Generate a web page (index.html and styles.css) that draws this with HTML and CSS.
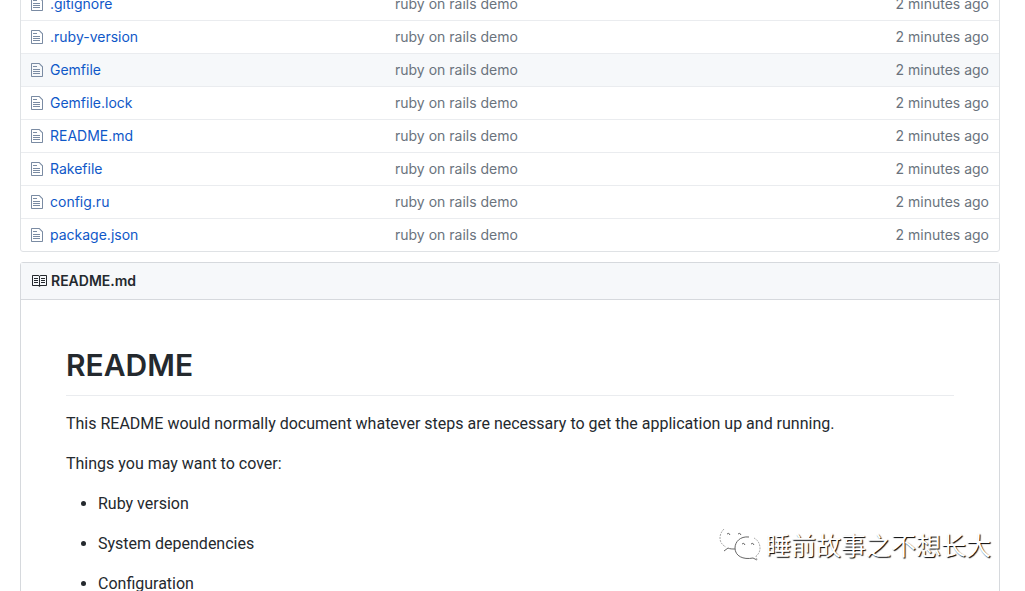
FILE: index.html
```
<!DOCTYPE html>
<html lang="en">
<head>
<meta charset="utf-8">
<title>README.md</title>
<link rel="stylesheet" href="styles.css">
</head>
<body>
<svg class="defs" aria-hidden="true">
  <symbol id="file" viewBox="0 0 12 16"><path d="M6 5H2V4h4v1zM2 8h7V7H2v1zm0 2h7V9H2v1zm0 2h7v-1H2v1zm10-7.5V14c0 .55-.45 1-1 1H1c-.55 0-1-.45-1-1V2c0-.55.45-1 1-1h7.5L12 4.5zM11 5L8 2H1v12h10V5z"/></symbol>
</svg>
<main class="page">
  <div class="files">
    <table class="file-table">
      <tbody>
        <tr><td class="icon"><svg class="file-icon"><use href="#file"/></svg></td><td class="name"><a href="#">.gitignore</a></td><td class="message">ruby on rails demo</td><td class="age">2 minutes ago</td></tr>
        <tr><td class="icon"><svg class="file-icon"><use href="#file"/></svg></td><td class="name"><a href="#">.ruby-version</a></td><td class="message">ruby on rails demo</td><td class="age">2 minutes ago</td></tr>
        <tr class="active"><td class="icon"><svg class="file-icon"><use href="#file"/></svg></td><td class="name"><a href="#">Gemfile</a></td><td class="message">ruby on rails demo</td><td class="age">2 minutes ago</td></tr>
        <tr><td class="icon"><svg class="file-icon"><use href="#file"/></svg></td><td class="name"><a href="#">Gemfile.lock</a></td><td class="message">ruby on rails demo</td><td class="age">2 minutes ago</td></tr>
        <tr><td class="icon"><svg class="file-icon"><use href="#file"/></svg></td><td class="name"><a href="#">README.md</a></td><td class="message">ruby on rails demo</td><td class="age">2 minutes ago</td></tr>
        <tr><td class="icon"><svg class="file-icon"><use href="#file"/></svg></td><td class="name"><a href="#">Rakefile</a></td><td class="message">ruby on rails demo</td><td class="age">2 minutes ago</td></tr>
        <tr><td class="icon"><svg class="file-icon"><use href="#file"/></svg></td><td class="name"><a href="#">config.ru</a></td><td class="message">ruby on rails demo</td><td class="age">2 minutes ago</td></tr>
        <tr><td class="icon"><svg class="file-icon"><use href="#file"/></svg></td><td class="name"><a href="#">package.json</a></td><td class="message">ruby on rails demo</td><td class="age">2 minutes ago</td></tr>
      </tbody>
    </table>
  </div>
  <section class="readme">
    <h2 class="readme-title">
      <svg class="book-icon" viewBox="0 0 16 16" aria-hidden="true"><path d="M3 5h4v1H3V5zm0 3h4V7H3v1zm0 2h4V9H3v1zm11-5h-4v1h4V5zm0 2h-4v1h4V7zm0 2h-4v1h4V9zm2-6v9c0 .55-.45 1-1 1H9.5l-1 1-1-1H2c-.55 0-1-.45-1-1V3c0-.55.45-1 1-1h5.5l1 1 1-1H15c.55 0 1 .45 1 1zm-8 .5L7.5 3H2v9h6V3.5zm7-.5H9.5l-.5.5V12h6V3z"/></svg>
      README.md
    </h2>
    <article class="markdown">
      <h1>README</h1>
      <p>This README would normally document whatever steps are necessary to get the application up and running.</p>
      <p>Things you may want to cover:</p>
      <ul>
        <li>Ruby version</li>
        <li>System dependencies</li>
        <li>Configuration</li>
      </ul>
    </article>
  </section>
</main>
<div class="watermark" lang="zh">
  <svg class="chat-icon" viewBox="0 0 42 34" aria-hidden="true">
    <path class="edge" d="M5 2C2 5 1 8 1 11c0 4 2 7 6 9"/>
    <path class="line" d="M5 24l4-3c2 1 4 1 7 1"/>
    <path class="line" d="M30 10c-9-1-14 5-14 11 0 8 8 12 18 10l4 2"/>
    <path class="edge" d="M38 33l-1-4c3-2 4-5 4-8 0-4-2-8-6-10"/>
    <path class="line" d="M8 7q2-2 3 1M19 7q2-2 3 1M23 17q2-2 3 1M32 17q2-2 3 1"/>
  </svg>
  <span>睡前故事之不想长大</span>
</div>
</body>
</html>
```
FILE: styles.css
```
* { box-sizing: border-box; }
body {
  margin: 0;
  height: 100vh;
  overflow: hidden;
  background: #fff;
  color: #24292e;
  font: 14px/20px Inter, "Liberation Sans", "Noto Sans CJK SC", sans-serif;
}
.defs { display: none; }
.page { padding: 0 25px 0 20px; }

/* The list is scrolled partly out of view. */
.files {
  margin-top: -14px;
  border: 1px solid #dfe2e5;
  border-radius: 3px;
}
.file-table {
  width: 100%;
  border-collapse: separate;
  border-spacing: 0;
  table-layout: fixed;
}
.file-table td {
  height: 33px;
  padding: 6px 10px 6px 0;
  border-top: 1px solid #eaecef;
  color: #6a737d;
  white-space: nowrap;
}
.file-table tr:first-child td { border-top: 0; padding-top: 7px; }
.file-table .icon { width: 29px; padding-left: 10px; padding-right: 0; }
.file-table .name { width: 345px; }
.file-table .age { width: 125px; text-align: right; }
.active td { background: #f6f8fa; }
.file-table a { color: #0f58c8; text-decoration: none; }
.file-icon {
  display: block;
  width: 12px;
  height: 16px;
  fill: #7a8ba3;
}

.readme {
  margin-top: 10px;
  border: 1px solid #d6d9dd;
  border-radius: 3px 3px 0 0;
}
.readme-title {
  display: flex;
  align-items: center;
  gap: 4px;
  margin: 0;
  padding: 8px 10px;
  border-bottom: 1px solid #d6d9dd;
  background: #f6f8fa;
  font-size: 14px;
  line-height: 20px;
  font-weight: 600;
}
.book-icon { width: 16px; height: 16px; fill: #24292e; }
.markdown {
  padding: 45px;
  font-family: Roboto, "Liberation Sans", sans-serif;
  font-size: 16px;
  line-height: 24px;
}
.markdown h1 {
  margin: 0 0 16px;
  padding-bottom: 10px;
  border-bottom: 1px solid #eaecef;
  font-family: Inter, "Liberation Sans", sans-serif;
  font-size: 30px;
  line-height: 40px;
  font-weight: 600;
}
.markdown p { margin: 0 0 16px; }
.markdown ul { margin: 0; padding-left: 32px; }
.markdown li { margin-bottom: 16px; }

.watermark {
  position: absolute;
  right: 34px;
  bottom: 29px;
  display: flex;
  align-items: center;
  gap: 5px;
  color: #fff;
  font: 25px/36px "Noto Sans CJK SC", sans-serif;
  text-shadow: 1px 1px 1px #000;
}
.chat-icon {
  width: 42px;
  height: 34px;
  fill: none;
  stroke: #666;
}
.chat-icon .edge { stroke: #aaa; stroke-dasharray: 2 1; }
```
